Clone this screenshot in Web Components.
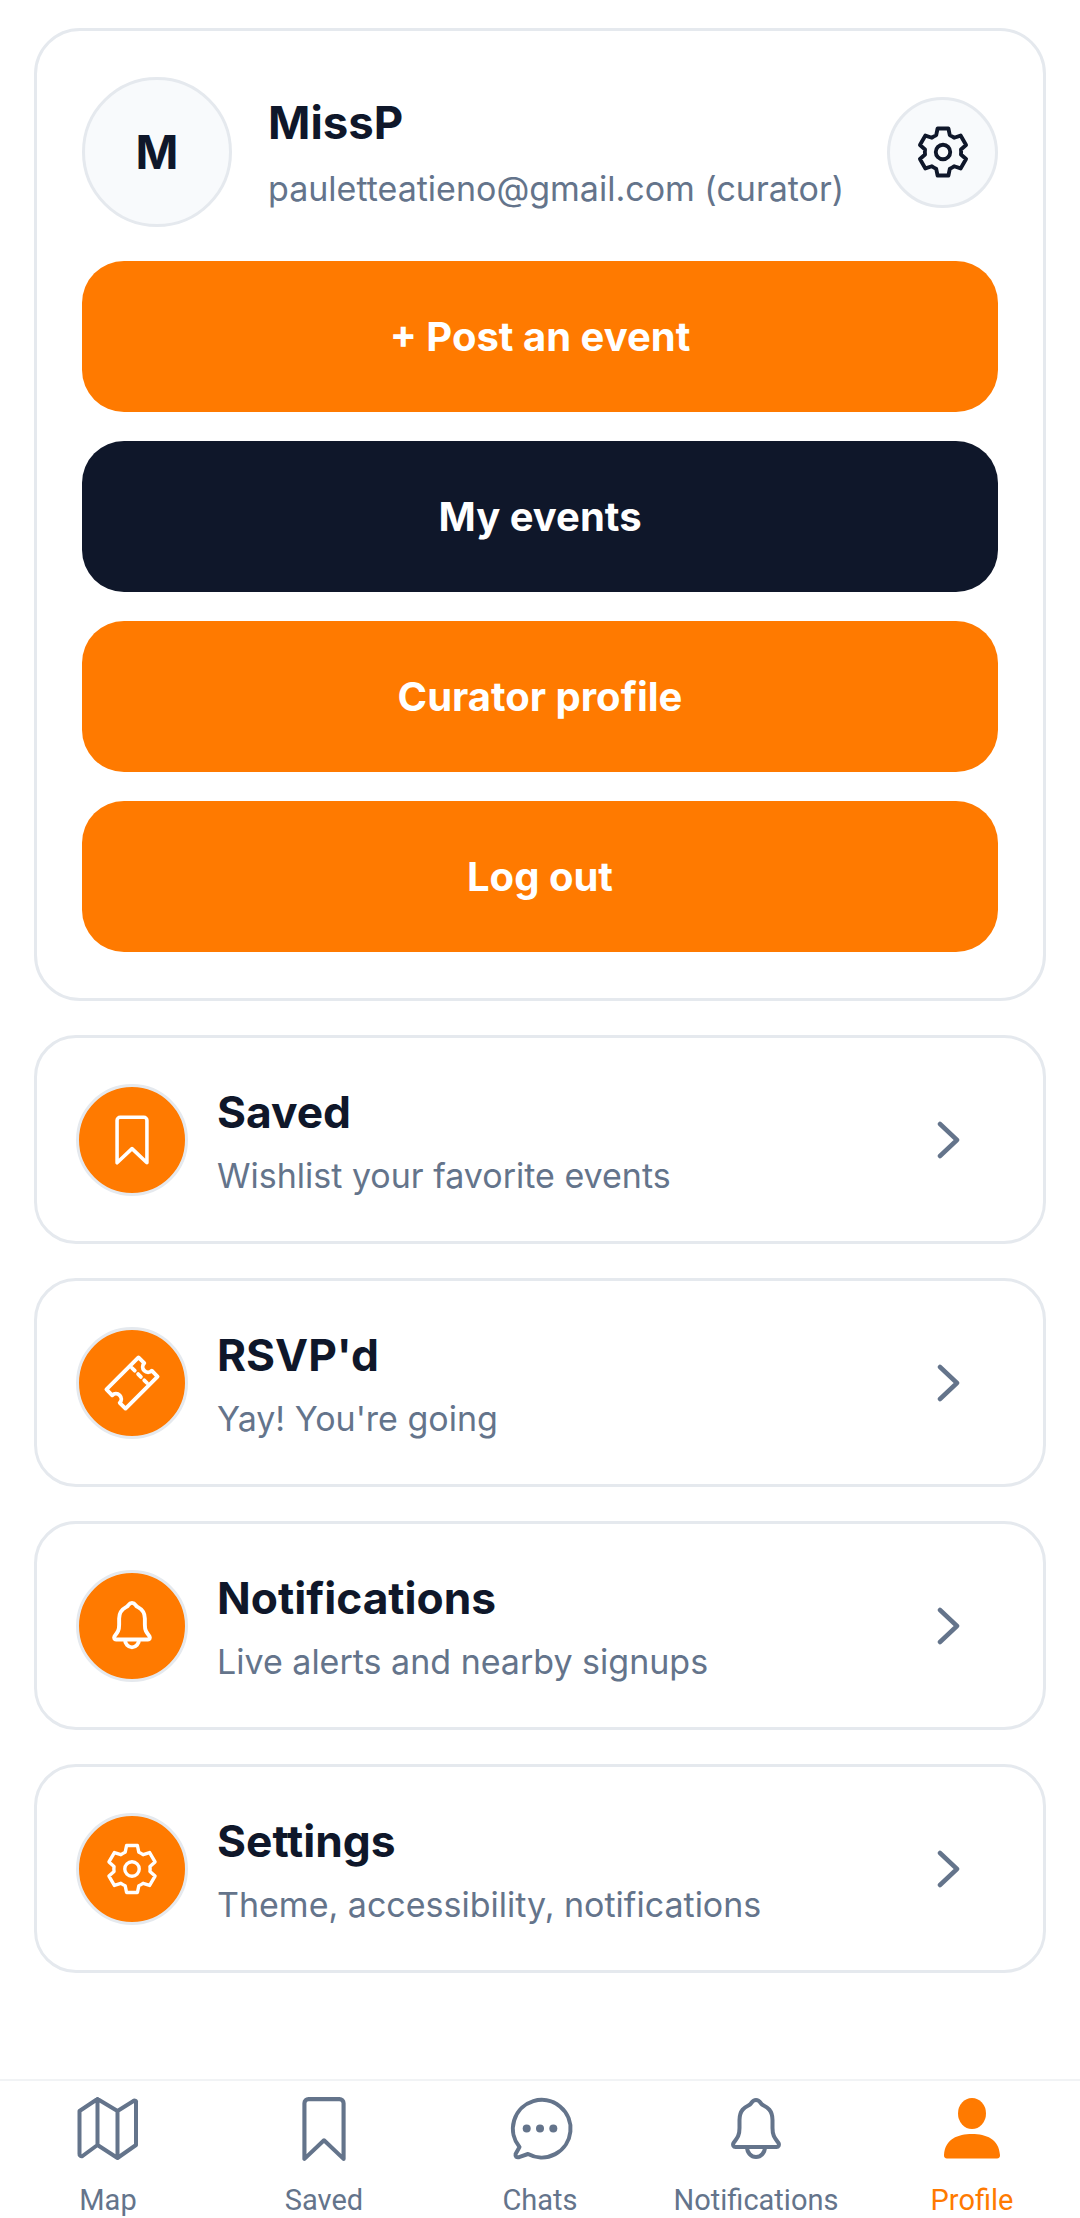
<!DOCTYPE html>
<html lang="en">
<head>
<meta charset="utf-8">
<title>Profile</title>
<style>
    html, body { margin: 0; padding: 0; background: #fff; }
    body { font-family: "Inter", "Liberation Sans", sans-serif; }
</style>
</head>
<body>
<profile-page>
    <profile-card name="MissP" email="pauletteatieno@gmail.com (curator)" initial="M">
        <action-button>+ Post an event</action-button>
        <action-button variant="dark">My events</action-button>
        <action-button>Curator profile</action-button>
        <action-button>Log out</action-button>
    </profile-card>
    <menu-row icon="bookmark" heading="Saved" text="Wishlist your favorite events"></menu-row>
    <menu-row icon="ticket" heading="RSVP'd" text="Yay! You're going"></menu-row>
    <menu-row icon="bell" heading="Notifications" text="Live alerts and nearby signups"></menu-row>
    <menu-row icon="gear" heading="Settings" text="Theme, accessibility, notifications"></menu-row>
    <tab-bar slot="tabs">
        <tab-item icon="map" label="Map"></tab-item>
        <tab-item icon="bookmark" label="Saved"></tab-item>
        <tab-item icon="chat" label="Chats"></tab-item>
        <tab-item icon="bell" label="Notifications"></tab-item>
        <tab-item icon="person" label="Profile" active></tab-item>
    </tab-bar>
</profile-page>

<script>
function gearPath() {
    const pt = (r, deg) => {
        const a = deg * Math.PI / 180;
        return `${(28 + r * Math.cos(a)).toFixed(2)} ${(28 + r * Math.sin(a)).toFixed(2)}`;
    };
    let d = '';
    for (let k = 0; k < 6; k++) {
        const a = -90 + k * 60;
        d += `${k ? 'L' : 'M'}${pt(18.8, a - 22)} L${pt(25, a - 13)} L${pt(25, a + 13)} L${pt(18.8, a + 22)} `;
        d += `A18.8 18.8 0 0 1 ${pt(18.8, a + 38)} `;
    }
    return d + 'Z';
}

const BELL = 'M28 5c-3 0-4 2-5.500 4s-11 3-11 16v8c0 7-1.500 9-6 15-1 2 0 4 2 4h41c2 0 3-2 2-4-4.500-6-6-8-6-15v-8c0-13-9.500-14-11-16s-2.500-4-5.500-4z M19 52a9 10 0 0 0 18 0';

const ICONS = {
    bookmark: `<path d="M9 62V8a4 4 0 0 1 4-4h30a4 4 0 0 1 4 4v54L28 44z"/>`,
    ticket: `<g transform="rotate(-45 28 28)">
        <path d="M4.500 14h47v8.500a5.500 5.500 0 0 0 0 11V42h-47v-8.500a5.500 5.500 0 0 0 0-11z"/>
        <path d="M39 17v22" stroke-dasharray="4 5"/>
    </g>`,
    bell: `<path d="${BELL}"/>`,
    gear: `<path d="${gearPath()}"/><circle cx="28" cy="28" r="7.500"/>`,
    map: `<path d="M4 16 22 4l20 12 16-10a1.500 1.500 0 0 1 2.500 1.500V50L42 63 22 50 7 61a2 2 0 0 1-3-2z M22 4v46 M42 16v47"/>`,
    chat: `<path d="M13.500 52A28.800 28.800 0 1 1 22 59l-9 3.200c-2.500.6-4-.7-3.400-3.200z"/><g fill="currentColor" stroke="none"><circle cx="20.700" cy="33.500" r="4"/><circle cx="34" cy="33.500" r="4"/><circle cx="47.300" cy="33.500" r="4"/></g>`,
    person: `<g fill="currentColor" stroke="none"><ellipse cx="28" cy="18.500" rx="14" ry="15.500"/><path d="M0 60c1-16 14-21 28-21s27 5 28 21c.2 2-1 3.500-3 3.500H3c-2 0-3.200-1.500-3-3.500z"/></g>`
};

class UiIcon extends HTMLElement {
    constructor() {
        super();
        this.attachShadow({ mode: 'open' });
    }
    connectedCallback() {
        const name = this.getAttribute('name');
        const box = { map: '0 0 65 68', chat: '0 0 68 68', bell: '0 0 56 68', bookmark: '0 0 56 66', person: '0 0 56 68' }[name] || '0 0 56 56';
        const stroke = this.getAttribute('stroke') || '4';
        this.shadowRoot.innerHTML = `
<style>
    :host { display: block; line-height: 0; }
    svg { width: 100%; height: 100%; overflow: visible; }
</style>
<svg viewBox="${box}" fill="none" stroke="currentColor" stroke-width="${stroke}" stroke-linecap="round" stroke-linejoin="round">${ICONS[name]}</svg>`;
    }
}
customElements.define('ui-icon', UiIcon);

const pageTemplate = document.createElement('template');
pageTemplate.innerHTML = `
<style>
    :host {
        display: flex;
        flex-direction: column;
        height: 2218px;
        background: #fff;
        overflow: hidden;
    }
    main {
        display: flex;
        flex-direction: column;
        gap: 34px;
        padding: 28px 34px 0;
        flex: 1;
    }
</style>
<main><slot></slot></main>
<slot name="tabs"></slot>
`;

class ProfilePage extends HTMLElement {
    constructor() {
        super();
        this.attachShadow({ mode: 'open' });
        this.shadowRoot.appendChild(pageTemplate.content.cloneNode(true));
    }
}
customElements.define('profile-page', ProfilePage);

const cardTemplate = document.createElement('template');
cardTemplate.innerHTML = `
<style>
    :host {
        display: block;
        border: 3px solid #e5e9ee;
        border-radius: 46px;
        padding: 46px 45px 46px 45px;
        background: #fff;
    }
    header {
        display: flex;
        align-items: center;
        margin-bottom: 34px;
    }
    .avatar {
        width: 150px;
        height: 150px;
        box-sizing: border-box;
        border: 3px solid #e5e9ee;
        border-radius: 50%;
        background: #f8fafc;
        color: #0f172a;
        font-weight: 700;
        font-size: 46px;
        display: flex;
        align-items: center;
        justify-content: center;
        flex: none;
    }
    .who {
        flex: 1;
        margin-left: 36px;
        padding-top: 4px;
        min-width: 0;
    }
    .name {
        color: #0f172a;
        font-weight: 700;
        font-size: 45.5px;
        line-height: 52px;
    }
    .email {
        color: #64748b;
        font-size: 34px;
        line-height: 44px;
        margin-top: 18px;
        white-space: nowrap;
    }
    .cog {
        width: 111px;
        height: 111px;
        box-sizing: border-box;
        border: 3px solid #e5e9ee;
        border-radius: 50%;
        background: #f8fafc;
        color: #0f172a;
        display: flex;
        align-items: center;
        justify-content: center;
        flex: none;
    }
    .cog ui-icon { width: 54px; height: 54px; }
    .actions {
        display: flex;
        flex-direction: column;
        gap: 29px;
    }
</style>
<header>
    <div class="avatar" id="initial"></div>
    <div class="who">
        <div class="name" id="name"></div>
        <div class="email" id="email"></div>
    </div>
    <div class="cog"><ui-icon name="gear" stroke="4"></ui-icon></div>
</header>
<div class="actions"><slot></slot></div>
`;

class ProfileCard extends HTMLElement {
    constructor() {
        super();
        this.attachShadow({ mode: 'open' });
        this.shadowRoot.appendChild(cardTemplate.content.cloneNode(true));
    }
    connectedCallback() {
        this.shadowRoot.querySelector('#initial').textContent = this.getAttribute('initial');
        this.shadowRoot.querySelector('#name').textContent = this.getAttribute('name');
        this.shadowRoot.querySelector('#email').textContent = this.getAttribute('email');
    }
}
customElements.define('profile-card', ProfileCard);

const buttonTemplate = document.createElement('template');
buttonTemplate.innerHTML = `
<style>
    :host {
        display: flex;
        align-items: center;
        justify-content: center;
        height: 151px;
        border-radius: 42px;
        background: #ff7a00;
        color: #fff;
        font-weight: 700;
        font-size: 40px;
    }
    :host([variant="dark"]) { background: #0f172a; }
</style>
<slot></slot>
`;

class ActionButton extends HTMLElement {
    constructor() {
        super();
        this.attachShadow({ mode: 'open' });
        this.shadowRoot.appendChild(buttonTemplate.content.cloneNode(true));
    }
}
customElements.define('action-button', ActionButton);

const rowTemplate = document.createElement('template');
rowTemplate.innerHTML = `
<style>
    :host {
        display: flex;
        align-items: center;
        box-sizing: border-box;
        height: 209px;
        border: 3px solid #e5e9ee;
        border-radius: 42px;
        padding: 0 83px 0 39px;
        background: #fff;
    }
    .badge {
        width: 112px;
        height: 112px;
        box-sizing: border-box;
        border: 3px solid #e5e9ee;
        border-radius: 50%;
        background: #ff7a00;
        color: #fff;
        display: flex;
        align-items: center;
        justify-content: center;
        flex: none;
    }
    .badge ui-icon { width: 54px; height: 54px; }
    .badge ui-icon[name="bookmark"] { width: 44px; height: 52px; }
    .badge ui-icon[name="bell"] { width: 44px; height: 53px; }
    .text { flex: 1; margin-left: 29px; padding-top: 5px; min-width: 0; }
    h2 {
        margin: 0;
        color: #0f172a;
        font-weight: 700;
        font-size: 44.3px;
        line-height: 52px;
    }
    p {
        margin: 16px 0 0;
        color: #64748b;
        font-size: 34px;
        line-height: 44px;
        white-space: nowrap;
    }
    .chevron { width: 24px; height: 38px; color: #64748b; flex: none; }
</style>
<div class="badge"><ui-icon id="icon"></ui-icon></div>
<div class="text">
    <h2 id="heading"></h2>
    <p id="text"></p>
</div>
<svg class="chevron" viewBox="0 0 24 38" fill="none" stroke="currentColor" stroke-width="4.500" stroke-linecap="round" stroke-linejoin="round"><path d="M4 3l17 16L4 35"/></svg>
`;

class MenuRow extends HTMLElement {
    constructor() {
        super();
        this.attachShadow({ mode: 'open' });
        const content = rowTemplate.content.cloneNode(true);
        content.querySelector('#icon').setAttribute('name', this.getAttribute('icon'));
        const sw = { bookmark: '4.500', bell: '5', ticket: '4', gear: '3.500' }[this.getAttribute('icon')];
        content.querySelector('#icon').setAttribute('stroke', sw);
        content.querySelector('#heading').textContent = this.getAttribute('heading');
        content.querySelector('#text').textContent = this.getAttribute('text');
        this.shadowRoot.appendChild(content);
    }
}
customElements.define('menu-row', MenuRow);

const tabBarTemplate = document.createElement('template');
tabBarTemplate.innerHTML = `
<style>
    :host {
        display: grid;
        grid-template-columns: repeat(5, 1fr);
        border-top: 2px solid #f1f3f5;
        height: 137px;
        background: #fff;
        flex: none;
    }
</style>
<slot></slot>
`;

class TabBar extends HTMLElement {
    constructor() {
        super();
        this.attachShadow({ mode: 'open' });
        this.shadowRoot.appendChild(tabBarTemplate.content.cloneNode(true));
    }
}
customElements.define('tab-bar', TabBar);

const tabTemplate = document.createElement('template');
tabTemplate.innerHTML = `
<style>
    :host {
        display: flex;
        flex-direction: column;
        align-items: center;
        color: #64748b;
        font-family: "Roboto", "Liberation Sans", sans-serif;
        font-size: 29px;
    }
    :host([active]) { color: #ff7a00; }
    ui-icon { height: 68px; width: 68px; margin-top: 14px; }
    span {
        margin-top: 20px;
        line-height: 34px;
        white-space: nowrap;
    }
</style>
<ui-icon id="icon"></ui-icon>
<span id="label"></span>
`;

class TabItem extends HTMLElement {
    constructor() {
        super();
        this.attachShadow({ mode: 'open' });
        const content = tabTemplate.content.cloneNode(true);
        content.querySelector('#icon').setAttribute('name', this.getAttribute('icon'));
        content.querySelector('#label').textContent = this.getAttribute('label');
        this.shadowRoot.appendChild(content);
    }
}
customElements.define('tab-item', TabItem);
</script>
</body>
</html>
